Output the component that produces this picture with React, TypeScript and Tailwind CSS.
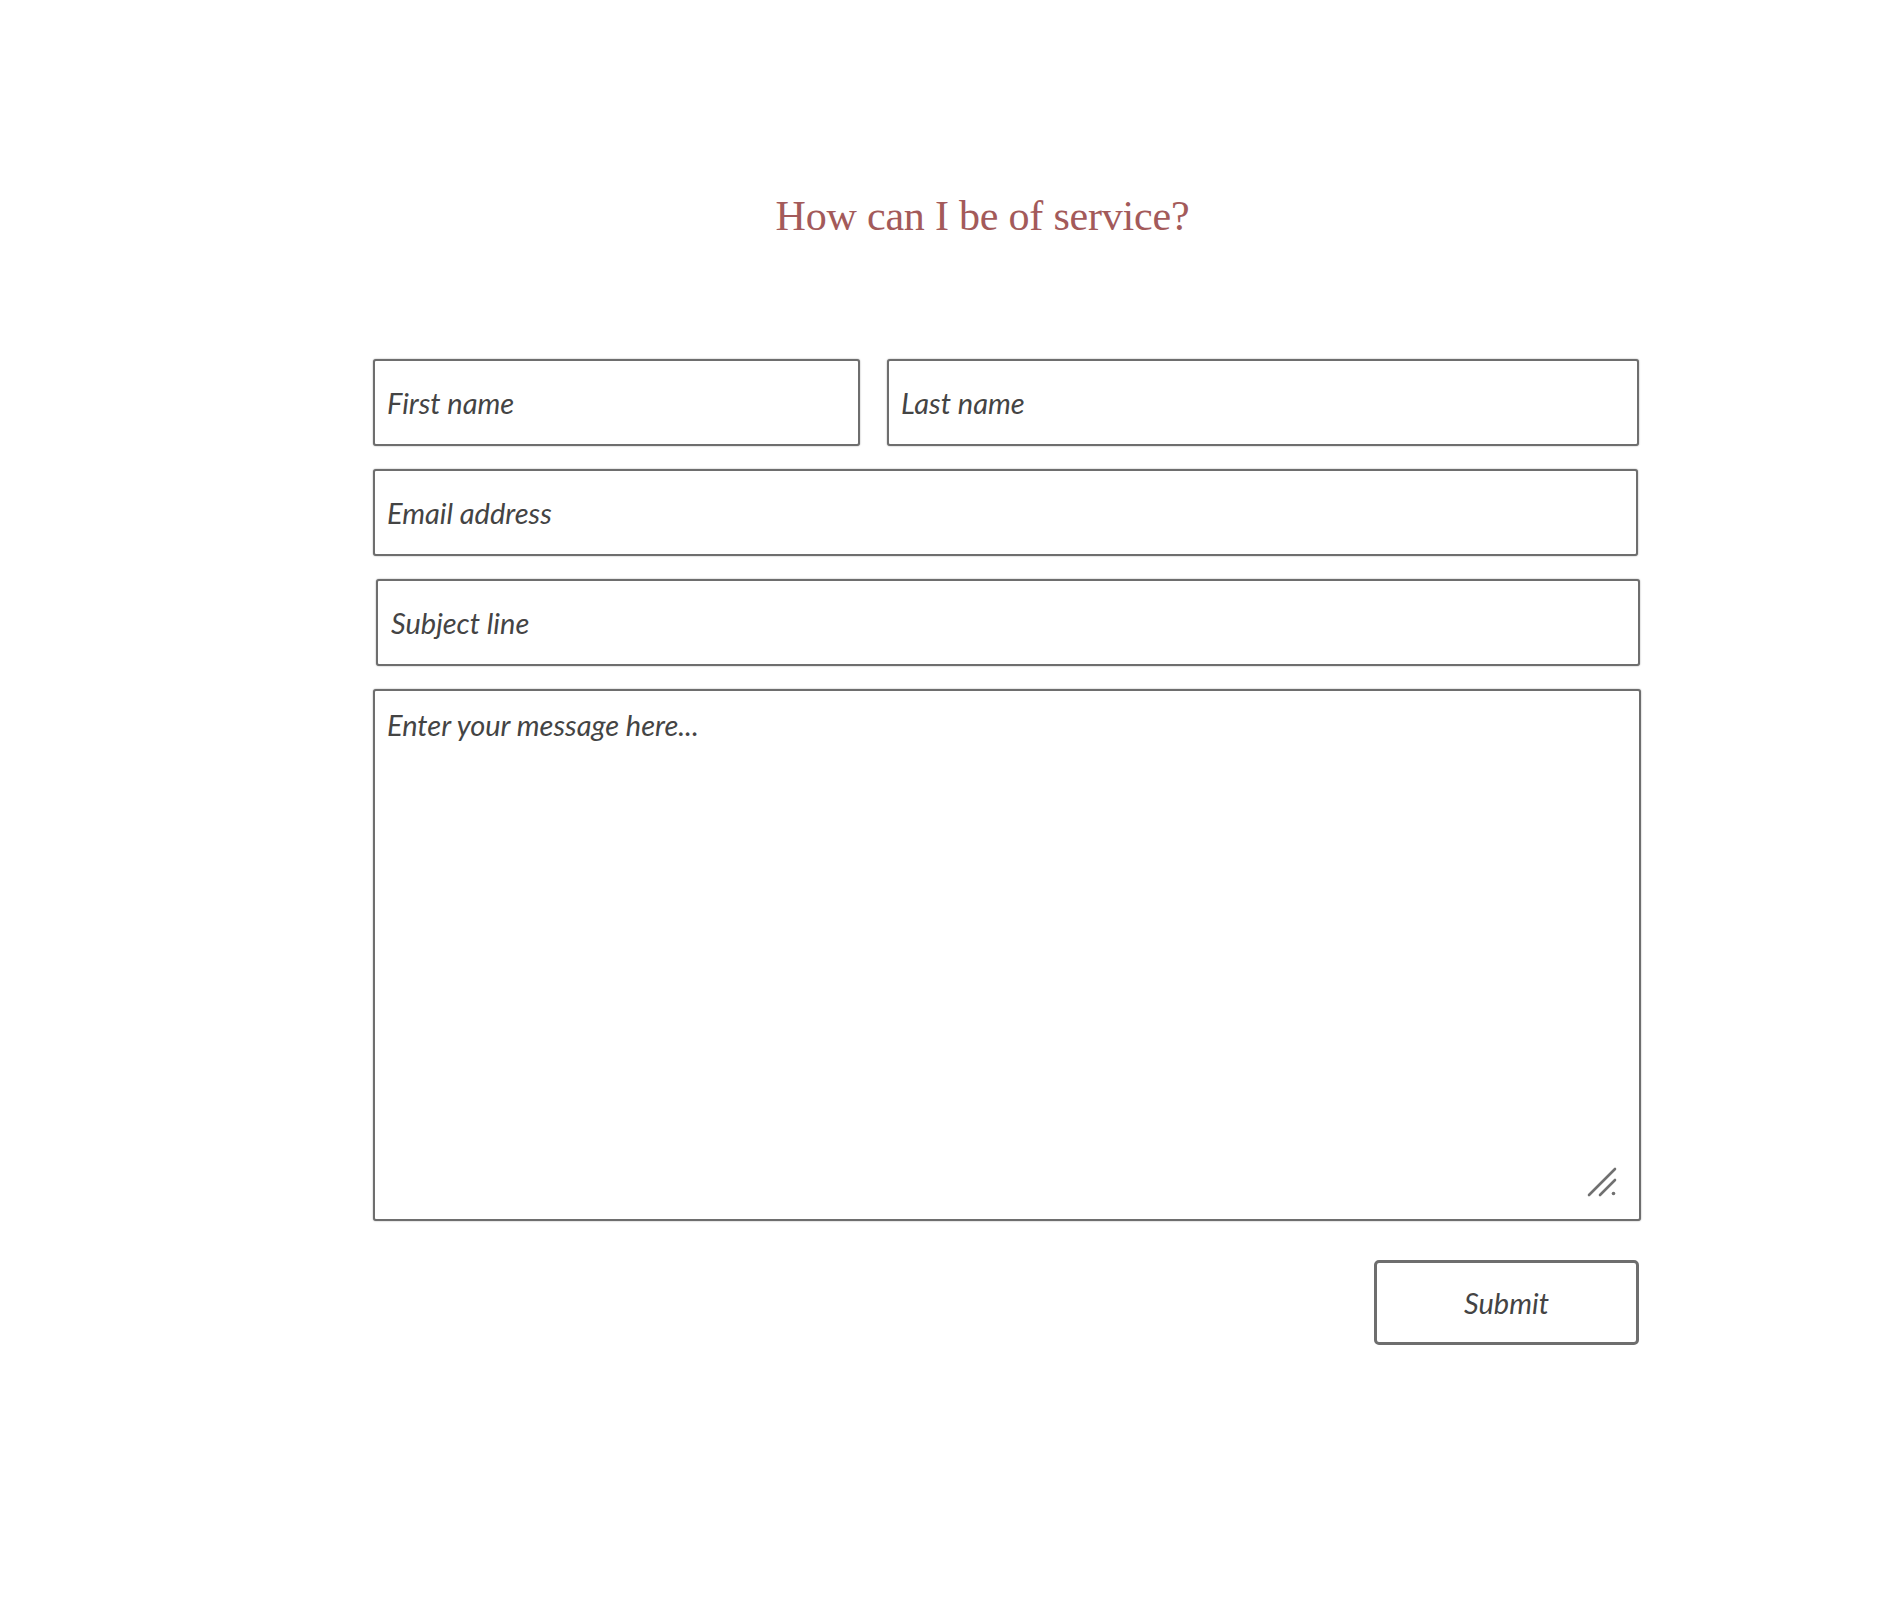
import React from "react";

const inputCls =
  "block h-[87px] border-2 border-[#6e6e6e] rounded-[3px] bg-white px-[12px] text-[29px] italic text-[#444] font-['Lato',sans-serif] placeholder:text-[#444] placeholder:italic outline-none shadow-[0_0_1.5px_#888]";

export default function App() {
  return (
    <div className="min-h-[1600px] w-[1894px] bg-white">
      <div className="pt-[192px] w-[1894px]">
        <h1 className="ml-[765px] w-[435px] text-center text-[42px] leading-[48px] text-[#a35a5a] font-['Liberation_Serif',serif] tracking-[-0.2px]">
          How can I be of service?
        </h1>
      </div>
      <form className="ml-[373px] mt-[119px] w-[1268px] flex flex-col">
        <div className="flex gap-[27px]">
          <input className={inputCls + " w-[487px]"} placeholder="First name" />
          <input className={inputCls + " w-[752px]"} placeholder="Last name" />
        </div>
        <input className={inputCls + " w-[1265px] mt-[23px]"} placeholder="Email address" />
        <input className={inputCls + " w-[1264px] mt-[23px] ml-[3px] px-[13px]"} placeholder="Subject line" />
        <div className="relative mt-[23px] w-[1268px] h-[532px]">
          <textarea
            className="block w-full h-full resize-none border-2 border-[#6e6e6e] rounded-[3px] bg-white px-[12px] pt-[12px] text-[29px] italic text-[#444] font-['Lato',sans-serif] placeholder:text-[#444] placeholder:italic outline-none shadow-[0_0_1.5px_#888]"
            placeholder="Enter your message here..."
          />
          <svg
            className="absolute right-[24px] bottom-[24px] pointer-events-none"
            width="30"
            height="30"
            viewBox="0 0 30 30"
          >
            <line x1="2" y1="28" x2="28" y2="2" stroke="#707070" strokeWidth="2.6" strokeLinecap="round" />
            <line x1="13" y1="28" x2="28" y2="13" stroke="#707070" strokeWidth="2.6" strokeLinecap="round" />
            <circle cx="26.5" cy="26.5" r="1.8" fill="#707070" />
          </svg>
        </div>
        <div className="flex justify-end mt-[39px]">
          <button
            type="button"
            className="w-[265px] h-[85px] mr-[2px] border-[3px] border-[#6e6e6e] rounded-[5px] bg-white text-[29px] italic text-[#444] font-['Lato',sans-serif]"
          >
            Submit
          </button>
        </div>
      </form>
    </div>
  );
}
